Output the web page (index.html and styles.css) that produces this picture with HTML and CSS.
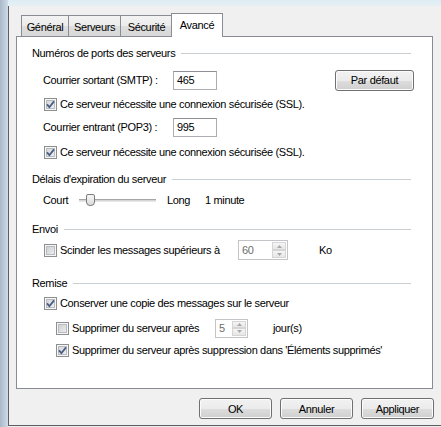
FILE: index.html
```html
<!DOCTYPE html>
<html lang="fr">
<head>
<meta charset="utf-8">
<title>Avancé</title>
<link rel="stylesheet" href="styles.css">
</head>
<body>
<div class="screen">
  <div class="sidebar"></div>
  <div class="main">
    <div class="topband"></div>
    <div class="dialog">
      <div class="tabs">
        <div class="tab t-gen">Général</div>
        <div class="tab t-srv">Serveurs</div>
        <div class="tab t-sec">Sécurité</div>
        <div class="tab t-adv active">Avancé</div>
      </div>
      <div class="panel">
        <div class="group g1"><span class="glabel">Numéros de ports des serveurs</span><span class="gline"></span></div>

        <div class="row r22 m8 indent">
          <span class="flabel">Courrier sortant (SMTP) :</span>
          <span class="field">465</span>
          <span class="btn defbtn">Par défaut</span>
        </div>
        <div class="row r16 m5 cbindent">
          <span class="cb"><svg viewBox="0 0 11 11" width="11" height="11"><path d="M2 5.4 L4.4 8.2 L9 2.4" /></svg></span>
          <span class="cbtext">Ce serveur nécessite une connexion sécurisée (SSL).</span>
        </div>
        <div class="row r22 m4 indent">
          <span class="flabel">Courrier entrant (POP3) :</span>
          <span class="field">995</span>
        </div>
        <div class="row r16 m6 cbindent">
          <span class="cb"><svg viewBox="0 0 11 11" width="11" height="11"><path d="M2 5.4 L4.4 8.2 L9 2.4" /></svg></span>
          <span class="cbtext">Ce serveur nécessite une connexion sécurisée (SSL).</span>
        </div>

        <div class="group m11"><span class="glabel">Délais d'expiration du serveur</span><span class="gline"></span></div>
        <div class="row r16 m5 indent">
          <span class="court">Court</span>
          <span class="slider"><span class="track"></span><span class="thumb"></span></span>
          <span class="long">Long</span>
          <span>1 minute</span>
        </div>

        <div class="group m13"><span class="glabel">Envoi</span><span class="gline"></span></div>
        <div class="row r22 m2 cbindent">
          <span class="cbgroup w194">
            <span class="cb off"></span>
            <span class="cbtext">Scinder les messages supérieurs à</span>
          </span>
          <span class="spin w50"><span class="val">60</span><span class="arrows"><span class="arr up"><svg viewBox="0 0 5 3" width="5" height="3"><path d="M0 3 L2.5 0 L5 3Z"/></svg></span><span class="arr dn"><svg viewBox="0 0 5 3" width="5" height="3"><path d="M0 0 L2.5 3 L5 0Z"/></svg></span></span></span>
          <span class="unit ko">Ko</span>
        </div>

        <div class="group m14"><span class="glabel">Remise</span><span class="gline"></span></div>
        <div class="row r16 m4 cbindent">
          <span class="cb"><svg viewBox="0 0 11 11" width="11" height="11"><path d="M2 5.4 L4.4 8.2 L9 2.4" /></svg></span>
          <span class="cbtext">Conserver une copie des messages sur le serveur</span>
        </div>
        <div class="row r22 m6 subindent">
          <span class="cbgroup w159">
            <span class="cb off"></span>
            <span class="cbtext">Supprimer du serveur après</span>
          </span>
          <span class="spin w33"><span class="val">5</span><span class="arrows"><span class="arr up"><svg viewBox="0 0 5 3" width="5" height="3"><path d="M0 3 L2.5 0 L5 3Z"/></svg></span><span class="arr dn"><svg viewBox="0 0 5 3" width="5" height="3"><path d="M0 0 L2.5 3 L5 0Z"/></svg></span></span></span>
          <span class="unit jours">jour(s)</span>
        </div>
        <div class="row r16 m3 subindent">
          <span class="cb"><svg viewBox="0 0 11 11" width="11" height="11"><path d="M2 5.4 L4.4 8.2 L9 2.4" /></svg></span>
          <span class="cbtext">Supprimer du serveur après suppression dans 'Éléments supprimés'</span>
        </div>
      </div>
      <div class="buttons">
        <span class="btn dlgbtn">OK</span>
        <span class="btn dlgbtn">Annuler</span>
        <span class="btn dlgbtn">Appliquer</span>
      </div>
    </div>
  </div>
</div>
</body>
</html>
```
FILE: styles.css
```css
* { box-sizing: border-box; }
html, body { margin: 0; padding: 0; }
body {
  font-family: "Liberation Sans", Arial, sans-serif;
  font-size: 11px;
  letter-spacing: -0.35px;
  color: #000;
  background: #f0f0f0;
}
.screen {
  width: 441px;
  height: 427px;
  overflow: hidden;
  display: flex;
}
.sidebar {
  width: 8px;
  flex: none;
  background: linear-gradient(to right, #a9b8c9, #cfdbe7);
}
.main {
  flex: 1;
  display: flex;
  flex-direction: column;
  background: #e9eef2;
}
.topband {
  height: 6px;
  flex: none;
  background: linear-gradient(#dcecf4, #e6f0f4);
}
.dialog {
  height: 420px;
  flex: none;
  background: #f0f0f0;
  border-left: 1px solid #5e5e5e;
  border-bottom: 1px solid #5e5e5e;
  padding-top: 7px;
}
.tabs {
  display: flex;
  align-items: flex-end;
  height: 23px;
  padding-left: 12px;
}
.tab {
  height: 21px;
  border: 1px solid #898c95;
  border-bottom: none;
  background: linear-gradient(#f3f3f3, #ebebeb 50%, #dedede 51%, #d8d8d8);
  display: flex;
  align-items: center;
  justify-content: center;
  margin-left: -1px;
  padding-top: 1px;
}
.t-gen { width: 48px; margin-left: 0; }
.t-srv { width: 53px; }
.t-sec { width: 53px; }
.t-adv { width: 52px; margin-left: -2px; }
.tab.active {
  height: 24px;
  margin-bottom: -1px;
  background: #fff;
  position: relative;
  z-index: 1;
  padding-top: 0;
  padding-bottom: 2px;
}
.panel {
  margin-left: 7px;
  width: 417px;
  height: 353px;
  background: #fff;
  border: 1px solid #898c95;
  padding: 8px 18px 0 15px;
  display: flex;
  flex-direction: column;
}
.group {
  height: 16px;
  display: flex;
  align-items: center;
  flex: none;
}
.gline {
  flex: 1;
  height: 1px;
  background: #c9ced2;
  margin-left: 6px;
  margin-right: 3px;
}
.row {
  display: flex;
  align-items: center;
  flex: none;
}
.r16 { height: 16px; }
.r22 { height: 22px; }
.m2 { margin-top: 2px; }
.m3 { margin-top: 3px; }
.m4 { margin-top: 4px; }
.m5 { margin-top: 5px; }
.m6 { margin-top: 6px; }
.m8 { margin-top: 8px; }
.m11 { margin-top: 11px; }
.m13 { margin-top: 13px; }
.m14 { margin-top: 14px; }
.indent { padding-left: 11px; }
.cbindent { padding-left: 12px; }
.subindent { padding-left: 24px; }
.flabel { width: 130px; flex: none; }
.field {
  width: 44px;
  height: 19px;
  border: 1px solid #abadb3;
  border-top-color: #8e9096;
  background: #fff;
  padding-left: 3px;
  display: flex;
  align-items: center;
}
.btn {
  display: flex;
  align-items: center;
  justify-content: center;
  height: 21px;
  border: 1px solid #707070;
  border-radius: 3px;
  background: linear-gradient(#f2f2f2, #ebebeb 50%, #dddddd 51%, #cfcfcf);
  box-shadow: inset 0 0 0 1px #fbfbfb;
}
.defbtn { width: 79px; margin-left: auto; }
.cb {
  width: 13px;
  height: 13px;
  flex: none;
  border: 1px solid #8e8f8f;
  background: linear-gradient(135deg, #cfd2d6, #f4f4f4);
  box-shadow: inset 0 0 0 1px #f6f6f6, inset 0 0 0 2px #b8bcc1;
  display: flex;
  align-items: center;
  justify-content: center;
}
.cb svg path {
  fill: none;
  stroke: #4a5c82;
  stroke-width: 1.8;
}
.cb.off {
  background: linear-gradient(135deg, #c7cace, #f2f2f2);
}
.cbtext { margin-left: 3px; white-space: nowrap; }
.cbgroup { display: flex; align-items: center; flex: none; }
.w194 { width: 194px; }
.w159 { width: 159px; }
.court { width: 36px; flex: none; }
.slider {
  width: 77px;
  height: 16px;
  position: relative;
  flex: none;
  display: flex;
  align-items: center;
}
.track {
  width: 100%;
  height: 3px;
  border-top: 1px solid #a6a6a6;
  border-bottom: 1px solid #e8e8e8;
  background: #d6d6d6;
}
.thumb {
  position: absolute;
  left: 7px;
  top: 2px;
  width: 9px;
  height: 12px;
  border: 1px solid #7b7b7b;
  border-radius: 2px 2px 4px 4px;
  background: linear-gradient(#f7f7f7, #dadada);
}
.long { width: 38px; margin-left: 11px; flex: none; }
.spin {
  height: 20px;
  border: 1px solid #c2c4c8;
  background: #fff;
  display: flex;
  flex: none;
  color: #6d6d6d;
}
.w50 { width: 50px; }
.w33 { width: 33px; height: 19px; }
.val { flex: 1; padding-left: 3px; display: flex; align-items: center; }
.arrows {
  width: 15px;
  display: flex;
  flex-direction: column;
  padding: 1px 1px 1px 0;
}
.arr {
  flex: 1;
  border: 1px solid #d5d5d5;
  background: linear-gradient(#f6f6f6, #e6e6e6);
  display: flex;
  align-items: center;
  justify-content: center;
}
.arr svg path { fill: #a8a8a8; }
.ko { margin-left: 31px; }
.jours { margin-left: 25px; }
.buttons {
  margin-top: 9px;
  margin-left: 7px;
  width: 418px;
  display: flex;
  justify-content: flex-end;
  gap: 8px;
}
.dlgbtn { width: 73px; }
```
